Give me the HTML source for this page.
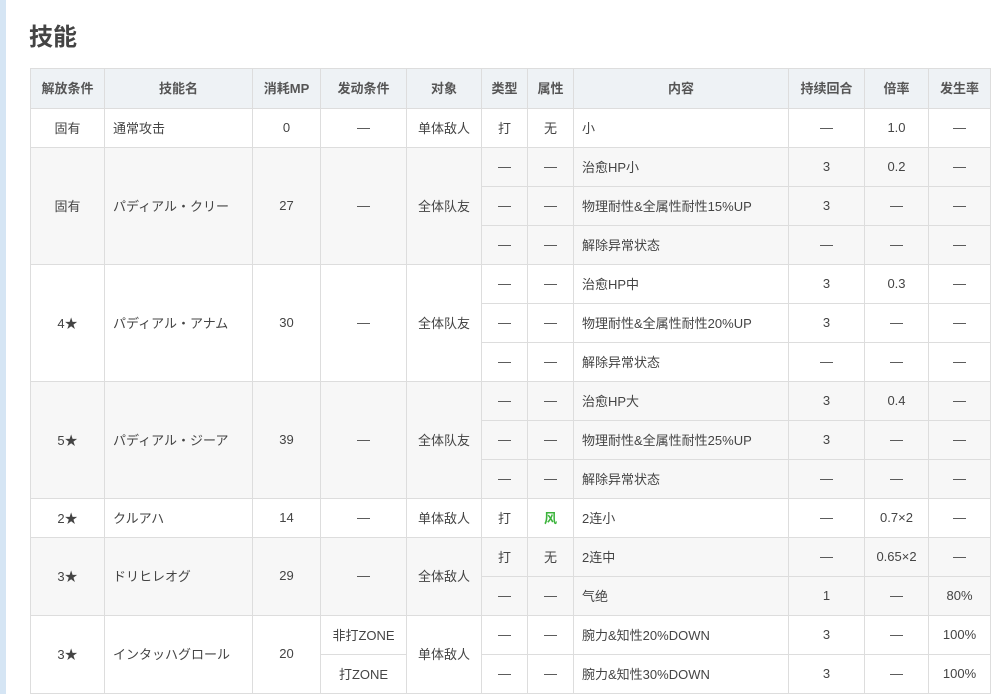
<!DOCTYPE html>
<html><head><meta charset="utf-8"><style>
html,body{margin:0;width:1001px;height:694px;overflow:hidden}
body{background:#fff;font-family:"Liberation Sans","Noto Sans CJK SC",sans-serif;color:#444;position:relative}
.strip{position:absolute;left:0;top:0;width:6px;height:694px;background:#d5e5f4}
h2{position:absolute;left:29px;top:22px;margin:0;font-size:24px;font-weight:bold;color:#444;line-height:32px}
table{position:absolute;left:30px;top:68px;border-collapse:collapse;table-layout:fixed;font-size:13px}
td,th{border:1px solid #ddd;height:36px;padding:0 0 2px 0;text-align:center;overflow:hidden;white-space:nowrap}
th{background:#eef2f5;font-weight:bold;color:#555;height:37px}
.l{text-align:left;padding-left:8px}
.g td{background:#f7f7f7}
.w{color:#3bb33b;font-weight:bold}
</style></head><body>
<div class="strip"></div>
<h2>技能</h2>
<table>
<colgroup><col style="width:74px"><col style="width:148px"><col style="width:68px"><col style="width:86px"><col style="width:75px"><col style="width:46px"><col style="width:46px"><col style="width:215px"><col style="width:76px"><col style="width:64px"><col style="width:62px"></colgroup>
<tr><th>解放条件</th><th>技能名</th><th>消耗MP</th><th>发动条件</th><th>对象</th><th>类型</th><th>属性</th><th>内容</th><th>持续回合</th><th>倍率</th><th>发生率</th></tr>
<tr><td>固有</td><td class="l">通常攻击</td><td>0</td><td>—</td><td>单体敌人</td><td>打</td><td>无</td><td class="l">小</td><td>—</td><td>1.0</td><td>—</td></tr>
<tr class="g"><td rowspan="3">固有</td><td rowspan="3" class="l">パディアル・クリー</td><td rowspan="3">27</td><td rowspan="3">—</td><td rowspan="3">全体队友</td><td>—</td><td>—</td><td class="l">治愈HP小</td><td>3</td><td>0.2</td><td>—</td></tr>
<tr class="g"><td>—</td><td>—</td><td class="l">物理耐性&amp;全属性耐性15%UP</td><td>3</td><td>—</td><td>—</td></tr>
<tr class="g"><td>—</td><td>—</td><td class="l">解除异常状态</td><td>—</td><td>—</td><td>—</td></tr>
<tr><td rowspan="3">4★</td><td rowspan="3" class="l">パディアル・アナム</td><td rowspan="3">30</td><td rowspan="3">—</td><td rowspan="3">全体队友</td><td>—</td><td>—</td><td class="l">治愈HP中</td><td>3</td><td>0.3</td><td>—</td></tr>
<tr><td>—</td><td>—</td><td class="l">物理耐性&amp;全属性耐性20%UP</td><td>3</td><td>—</td><td>—</td></tr>
<tr><td>—</td><td>—</td><td class="l">解除异常状态</td><td>—</td><td>—</td><td>—</td></tr>
<tr class="g"><td rowspan="3">5★</td><td rowspan="3" class="l">パディアル・ジーア</td><td rowspan="3">39</td><td rowspan="3">—</td><td rowspan="3">全体队友</td><td>—</td><td>—</td><td class="l">治愈HP大</td><td>3</td><td>0.4</td><td>—</td></tr>
<tr class="g"><td>—</td><td>—</td><td class="l">物理耐性&amp;全属性耐性25%UP</td><td>3</td><td>—</td><td>—</td></tr>
<tr class="g"><td>—</td><td>—</td><td class="l">解除异常状态</td><td>—</td><td>—</td><td>—</td></tr>
<tr><td>2★</td><td class="l">クルアハ</td><td>14</td><td>—</td><td>单体敌人</td><td>打</td><td class="w">风</td><td class="l">2连小</td><td>—</td><td>0.7×2</td><td>—</td></tr>
<tr class="g"><td rowspan="2">3★</td><td rowspan="2" class="l">ドリヒレオグ</td><td rowspan="2">29</td><td rowspan="2">—</td><td rowspan="2">全体敌人</td><td>打</td><td>无</td><td class="l">2连中</td><td>—</td><td>0.65×2</td><td>—</td></tr>
<tr class="g"><td>—</td><td>—</td><td class="l">气绝</td><td>1</td><td>—</td><td>80%</td></tr>
<tr><td rowspan="2">3★</td><td rowspan="2" class="l">インタッハグロール</td><td rowspan="2">20</td><td>非打ZONE</td><td rowspan="2">单体敌人</td><td>—</td><td>—</td><td class="l">腕力&amp;知性20%DOWN</td><td>3</td><td>—</td><td>100%</td></tr>
<tr><td>打ZONE</td><td>—</td><td>—</td><td class="l">腕力&amp;知性30%DOWN</td><td>3</td><td>—</td><td>100%</td></tr>
<tr><td></td><td></td><td></td><td></td><td></td><td></td><td></td><td></td><td></td><td></td><td></td></tr>
</table>
</body></html>
